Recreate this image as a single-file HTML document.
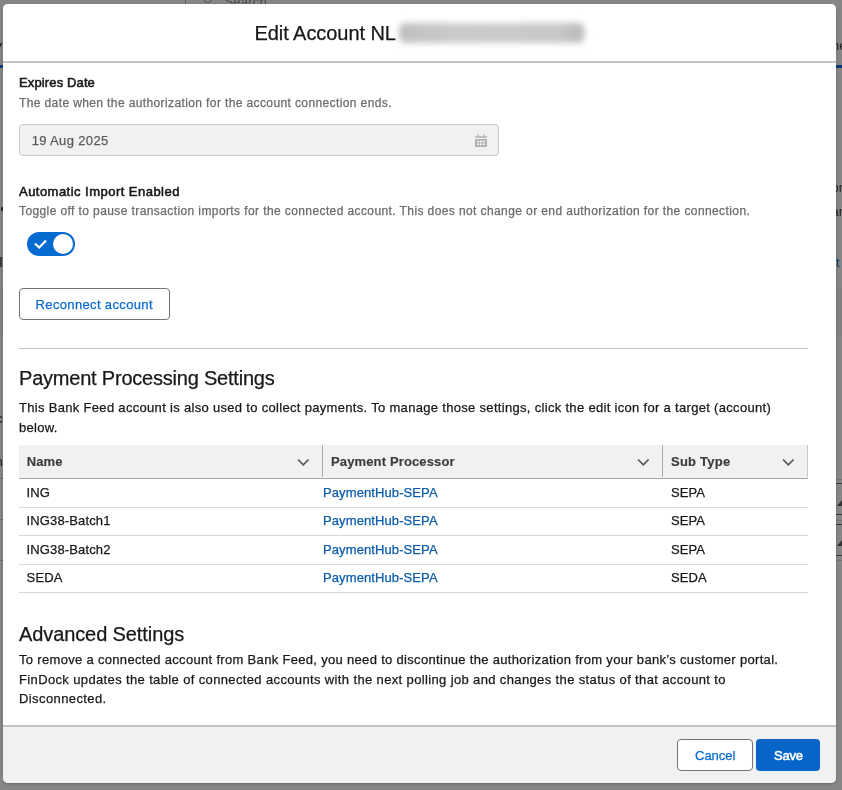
<!DOCTYPE html>
<html><head><meta charset="utf-8"><style>
html,body{margin:0;padding:0;width:842px;height:790px;overflow:hidden;background:#868686;font-family:"Liberation Sans", sans-serif}
#bg{will-change:transform;position:absolute;left:0;top:0;width:842px;height:790px}
#modal{-webkit-text-stroke:0.25px currentColor;will-change:transform;position:absolute;left:3px;top:4px;width:833px;height:779px;background:#fff;border-radius:5px;overflow:hidden;box-shadow:0 1px 3px rgba(0,0,0,0.22)}
</style></head><body>
<div id="bg">
<div style="position:absolute;left:185px;top:0;width:1px;height:4px;background:#5a5a5a"></div><div style="position:absolute;left:203px;top:-6px;width:7px;height:7px;border:1.5px solid #555;border-radius:50%"></div><div style="position:absolute;left:224.5px;top:-8.25px;font-size:13px;line-height:19.5px;font-weight:400;color:#4a4a4a;letter-spacing:0.2px;white-space:nowrap;">Search</div>
<div style="position:absolute;left:0;top:65px;width:3px;height:3px;background:#0a3a73"></div><div style="position:absolute;left:836px;top:65px;width:6px;height:3px;background:#0a3a73"></div><div style="position:absolute;left:832px;top:35.75px;font-size:13px;line-height:19.5px;font-weight:400;color:#222;letter-spacing:0px;white-space:nowrap;">ne</div>
<div style="position:absolute;left:0;top:288px;width:842px;height:48px;background:#808080"></div><div style="position:absolute;left:1px;top:207px;width:2px;height:4px;background:#2a2a2a;border-radius:1px"></div><div style="position:absolute;left:0;top:257px;width:2px;height:10px;background:#3c3c3c"></div><div style="position:absolute;left:-4px;top:408.75px;font-size:13px;line-height:19.5px;font-weight:400;color:#1a1a1a;letter-spacing:0px;white-space:nowrap;">c</div>
<div style="position:absolute;left:-4.5px;top:451.75px;font-size:13px;line-height:19.5px;font-weight:400;color:#1a1a1a;letter-spacing:0px;white-space:nowrap;">n</div>
<div style="position:absolute;left:0;top:478px;width:3px;height:1px;background:#6a6a6a"></div><div style="position:absolute;left:0;top:519px;width:3px;height:1px;background:#6a6a6a"></div><div style="position:absolute;left:0;top:560px;width:3px;height:1px;background:#6a6a6a"></div><div style="position:absolute;left:831.5px;top:177.55px;font-size:13px;line-height:19.5px;font-weight:400;color:#222;letter-spacing:0px;white-space:nowrap;">or</div>
<div style="position:absolute;left:831.5px;top:201.55px;font-size:13px;line-height:19.5px;font-weight:400;color:#222;letter-spacing:0px;white-space:nowrap;">an</div>
<div style="position:absolute;left:836px;top:252.75px;font-size:13px;line-height:19.5px;font-weight:400;color:#0b3a6e;letter-spacing:0px;white-space:nowrap;">t</div>
<div style="position:absolute;left:836px;top:478.5px;width:6px;height:1px;background:#747474"></div><div style="position:absolute;left:836px;top:483px;width:6px;height:1px;background:#3a3a3a"></div><div style="position:absolute;left:836px;top:514px;width:6px;height:1px;background:#3a3a3a"></div><div style="position:absolute;left:836px;top:519.5px;width:6px;height:1px;background:#747474"></div><div style="position:absolute;left:836px;top:524px;width:6px;height:1px;background:#3a3a3a"></div><div style="position:absolute;left:836px;top:555px;width:6px;height:1px;background:#3a3a3a"></div><div style="position:absolute;left:836px;top:560px;width:6px;height:1px;background:#747474"></div><svg style="position:absolute;left:837px;top:500px" width="6" height="6"><path d="M0 6 L5 0 L6 6 Z" fill="#333"/></svg><svg style="position:absolute;left:837px;top:540px" width="6" height="6"><path d="M0 6 L5 0 L6 6 Z" fill="#333"/></svg><svg style="position:absolute;left:0;top:42px" width="3" height="7"><path d="M-1 6 L1.6 1" stroke="#1a1a1a" stroke-width="1.4" fill="none"/></svg>
</div>
<div id="modal">
<div style="position:absolute;left:0;top:0;width:833px;height:57px;background:#fff;border-bottom:2px solid #c4c4c4"></div><div style="position:absolute;left:251.5px;top:16.97px;font-size:20px;line-height:25px;font-weight:400;color:#181818;letter-spacing:-0.06px;white-space:nowrap;">Edit Account NL</div>
<div style="position:absolute;left:396px;top:19px;width:186px;height:20px;background:linear-gradient(90deg,#bdbdbd 0%,#c4c4c4 12%,#cbcbcb 30%,#cacaca 60%,#c8c8c8 85%,#bcbcbc 96%,#c4c4c4 100%);border-radius:7px;filter:blur(3px)"></div><div style="position:absolute;left:16px;top:68.75px;font-size:13px;line-height:19.5px;font-weight:400;color:#181818;letter-spacing:0.13px;white-space:nowrap;-webkit-text-stroke:0.55px currentColor;">Expires Date</div>
<div style="position:absolute;left:16px;top:89.84px;font-size:12px;line-height:18px;font-weight:400;color:#6b6b6b;letter-spacing:0.385px;white-space:nowrap;">The date when the authorization for the account connection ends.</div>
<div style="position:absolute;left:16px;top:120px;width:478px;height:30px;background:#f1f1f1;border:1px solid #c9c9c9;border-radius:4px"></div><div style="position:absolute;left:28.7px;top:126.55px;font-size:13px;line-height:19.5px;font-weight:400;color:#5c5c5c;letter-spacing:0.35px;white-space:nowrap;">19 Aug 2025</div>
<svg style="position:absolute;left:472px;top:130px" width="13" height="14" viewBox="0 0 13 14">
<g fill="#b0b0b0"><rect x="0" y="2.2" width="12" height="1.6" rx="0.5"/><rect x="2.6" y="0.5" width="1.4" height="2.4"/><rect x="8" y="0.5" width="1.4" height="2.4"/>
<rect x="0" y="5" width="12" height="8" rx="1"/></g>
<g fill="#f3f3f3"><rect x="2.2" y="6.6" width="2" height="1.8"/><rect x="5" y="6.6" width="2" height="1.8"/><rect x="7.8" y="6.6" width="2" height="1.8"/>
<rect x="2.2" y="9.4" width="2" height="1.8"/><rect x="5" y="9.4" width="2" height="1.8"/><rect x="7.8" y="9.4" width="2" height="1.8"/></g></svg>
<div style="position:absolute;left:16px;top:177.95px;font-size:13px;line-height:19.5px;font-weight:400;color:#181818;letter-spacing:0.47px;white-space:nowrap;-webkit-text-stroke:0.55px currentColor;">Automatic Import Enabled</div>
<div style="position:absolute;left:16px;top:198.04px;font-size:12px;line-height:18px;font-weight:400;color:#6b6b6b;letter-spacing:0.4px;white-space:nowrap;">Toggle off to pause transaction imports for the connected account. This does not change or end authorization for the connection.</div>
<div style="position:absolute;left:24px;top:228px;width:48px;height:24px;background:#066bd0;border-radius:12px"></div>
<div style="position:absolute;left:50px;top:230px;width:20px;height:20px;background:#fff;border-radius:50%"></div>
<svg style="position:absolute;left:30px;top:234px" width="15" height="12" viewBox="0 0 15 12"><path d="M1.9 5.5 L6.2 9.6 L13 2.5" fill="none" stroke="#fff" stroke-width="2.1" stroke-linecap="butt" stroke-linejoin="miter"/></svg>
<div style="position:absolute;left:16px;top:284px;width:149px;height:30px;background:#fff;border:1px solid #747474;border-radius:4px"></div><div style="position:absolute;left:32.6px;top:290.55px;font-size:13px;line-height:19.5px;font-weight:400;color:#0a6bcf;letter-spacing:0.35px;white-space:nowrap;">Reconnect account</div>
<div style="position:absolute;left:16px;top:344px;width:789px;height:1px;background:#c2c2c2"></div><div style="position:absolute;left:16px;top:361.67px;font-size:20px;line-height:25px;font-weight:400;color:#181818;letter-spacing:-0.21px;white-space:nowrap;">Payment Processing Settings</div>
<div style="position:absolute;left:16px;top:394.30px;font-size:13px;line-height:20px;font-weight:400;color:#181818;letter-spacing:0.313px;white-space:nowrap;">This Bank Feed account is also used to collect payments. To manage those settings, click the edit icon for a target (account)</div>
<div style="position:absolute;left:16px;top:414.30px;font-size:13px;line-height:20px;font-weight:400;color:#181818;letter-spacing:0.304px;white-space:nowrap;">below.</div>
<div style="position:absolute;left:16px;top:441px;width:789px;height:33px;background:#f1f1f1;border-bottom:1px solid #a8a8a8"></div><div style="position:absolute;left:318.8px;top:441px;width:1px;height:32px;background:#a8a8a8"></div><div style="position:absolute;left:659px;top:441px;width:1px;height:32px;background:#a8a8a8"></div><div style="position:absolute;left:804px;top:441px;width:1px;height:32px;background:#c9c9c9"></div><svg style="position:absolute;left:293.7px;top:453.6px" width="13" height="9" viewBox="0 0 13 9"><path d="M1 1.5 L6.3 6.8 L11.6 1.5" fill="none" stroke="#555" stroke-width="1.7"/></svg>
<svg style="position:absolute;left:633.7px;top:453.6px" width="13" height="9" viewBox="0 0 13 9"><path d="M1 1.5 L6.3 6.8 L11.6 1.5" fill="none" stroke="#555" stroke-width="1.7"/></svg>
<svg style="position:absolute;left:779px;top:453.6px" width="13" height="9" viewBox="0 0 13 9"><path d="M1 1.5 L6.3 6.8 L11.6 1.5" fill="none" stroke="#555" stroke-width="1.7"/></svg>
<div style="position:absolute;left:23.7px;top:447.75px;font-size:13px;line-height:19.5px;font-weight:700;color:#3c3c3c;letter-spacing:0.1px;white-space:nowrap;-webkit-text-stroke:0.15px currentColor">Name</div>
<div style="position:absolute;left:328px;top:447.75px;font-size:13px;line-height:19.5px;font-weight:700;color:#3c3c3c;letter-spacing:0.135px;white-space:nowrap;-webkit-text-stroke:0.15px currentColor">Payment Processor</div>
<div style="position:absolute;left:668px;top:447.75px;font-size:13px;line-height:19.5px;font-weight:700;color:#3c3c3c;letter-spacing:0.24px;white-space:nowrap;-webkit-text-stroke:0.15px currentColor">Sub Type</div>
<div style="position:absolute;left:23.6px;top:478.55px;font-size:13px;line-height:19.5px;font-weight:400;color:#181818;letter-spacing:0.13px;white-space:nowrap;">ING</div>
<div style="position:absolute;left:320px;top:478.55px;font-size:13px;line-height:19.5px;font-weight:400;color:#0b5cab;letter-spacing:0.1px;white-space:nowrap;">PaymentHub-SEPA</div>
<div style="position:absolute;left:668px;top:478.55px;font-size:13px;line-height:19.5px;font-weight:400;color:#181818;letter-spacing:0.1px;white-space:nowrap;">SEPA</div>
<div style="position:absolute;left:16px;top:502.50px;width:789px;height:1px;background:#d8d8d8"></div><div style="position:absolute;left:23.6px;top:507.05px;font-size:13px;line-height:19.5px;font-weight:400;color:#181818;letter-spacing:0.13px;white-space:nowrap;">ING38-Batch1</div>
<div style="position:absolute;left:320px;top:507.05px;font-size:13px;line-height:19.5px;font-weight:400;color:#0b5cab;letter-spacing:0.1px;white-space:nowrap;">PaymentHub-SEPA</div>
<div style="position:absolute;left:668px;top:507.05px;font-size:13px;line-height:19.5px;font-weight:400;color:#181818;letter-spacing:0.1px;white-space:nowrap;">SEPA</div>
<div style="position:absolute;left:16px;top:531.00px;width:789px;height:1px;background:#d8d8d8"></div><div style="position:absolute;left:23.6px;top:535.55px;font-size:13px;line-height:19.5px;font-weight:400;color:#181818;letter-spacing:0.13px;white-space:nowrap;">ING38-Batch2</div>
<div style="position:absolute;left:320px;top:535.55px;font-size:13px;line-height:19.5px;font-weight:400;color:#0b5cab;letter-spacing:0.1px;white-space:nowrap;">PaymentHub-SEPA</div>
<div style="position:absolute;left:668px;top:535.55px;font-size:13px;line-height:19.5px;font-weight:400;color:#181818;letter-spacing:0.1px;white-space:nowrap;">SEPA</div>
<div style="position:absolute;left:16px;top:559.50px;width:789px;height:1px;background:#d8d8d8"></div><div style="position:absolute;left:23.6px;top:564.05px;font-size:13px;line-height:19.5px;font-weight:400;color:#181818;letter-spacing:0.13px;white-space:nowrap;">SEDA</div>
<div style="position:absolute;left:320px;top:564.05px;font-size:13px;line-height:19.5px;font-weight:400;color:#0b5cab;letter-spacing:0.1px;white-space:nowrap;">PaymentHub-SEPA</div>
<div style="position:absolute;left:668px;top:564.05px;font-size:13px;line-height:19.5px;font-weight:400;color:#181818;letter-spacing:0.1px;white-space:nowrap;">SEDA</div>
<div style="position:absolute;left:16px;top:588.00px;width:789px;height:1px;background:#d8d8d8"></div><div style="position:absolute;left:16px;top:617.57px;font-size:20px;line-height:25px;font-weight:400;color:#181818;letter-spacing:-0.1px;white-space:nowrap;">Advanced Settings</div>
<div style="position:absolute;left:16px;top:645.95px;font-size:13px;line-height:19.5px;font-weight:400;color:#181818;letter-spacing:0.317px;white-space:nowrap;">To remove a connected account from Bank Feed, you need to discontinue the authorization from your bank’s customer portal.</div>
<div style="position:absolute;left:16px;top:665.75px;font-size:13px;line-height:19.5px;font-weight:400;color:#181818;letter-spacing:0.365px;white-space:nowrap;">FinDock updates the table of connected accounts with the next polling job and changes the status of that account to</div>
<div style="position:absolute;left:16px;top:684.95px;font-size:13px;line-height:19.5px;font-weight:400;color:#181818;letter-spacing:0.4px;white-space:nowrap;">Disconnected.</div>
<div style="position:absolute;left:0;top:721px;width:833px;height:56px;background:#f1f1f1;border-top:2px solid #c4c4c4"></div><div style="position:absolute;left:674px;top:735px;width:74px;height:30px;background:#fff;border:1px solid #747474;border-radius:4px"></div><div style="position:absolute;left:692px;top:741.95px;font-size:13px;line-height:19.5px;font-weight:400;color:#0a6bcf;letter-spacing:0px;white-space:nowrap;">Cancel</div>
<div style="position:absolute;left:753px;top:735px;width:64px;height:32px;background:#0765ca;border-radius:4px"></div><div style="position:absolute;left:771px;top:741.95px;font-size:13px;line-height:19.5px;font-weight:400;color:#fff;letter-spacing:-0.2px;white-space:nowrap;-webkit-text-stroke:0.55px currentColor;">Save</div>

</div>
</body></html>
